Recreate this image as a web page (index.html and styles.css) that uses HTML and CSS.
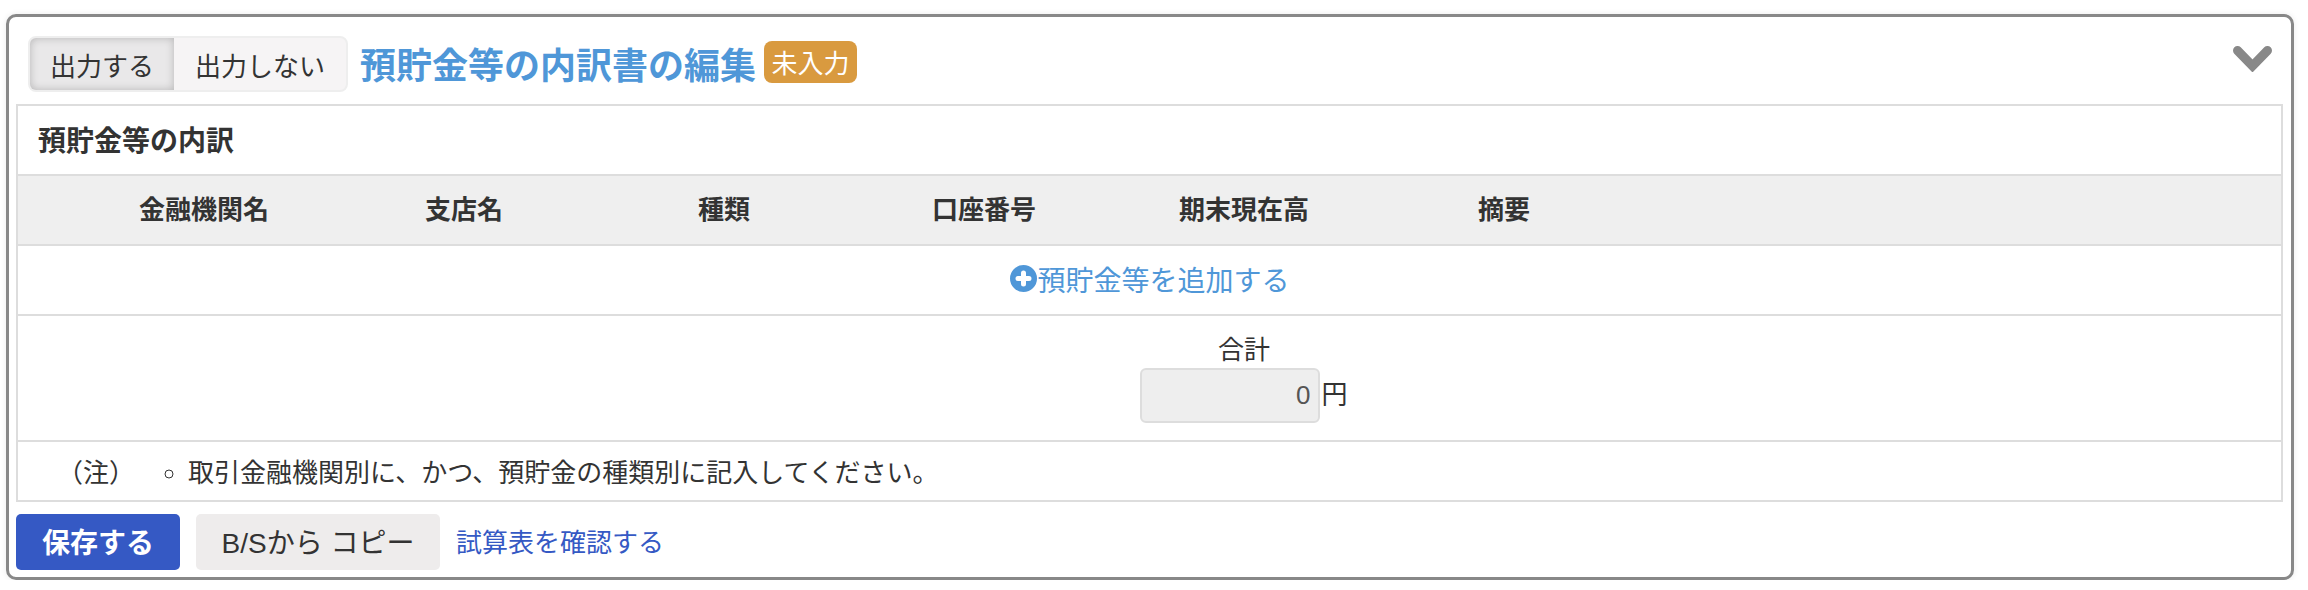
FILE: index.html

```html
<!DOCTYPE html>
<html lang="ja">
<head>
    <meta charset="UTF-8">
    <title>預貯金等の内訳書の編集</title>
    <link rel="stylesheet" href="styles.css">
</head>
<body>
    <section class="card">
        <header class="card-head">
            <div class="toggle">
                <span class="toggle-item active">出力する</span>
                <span class="toggle-item">出力しない</span>
            </div>
            <h2 class="card-title">預貯金等の内訳書の編集</h2>
            <span class="badge">未入力</span>
            <svg class="chevron" width="39" height="26" viewBox="0 0 39 26">
                <path d="M4.5 4.5 L19.5 20 L34.5 4.5" fill="none" stroke="#888" stroke-width="9" stroke-linecap="round" stroke-linejoin="miter"/>
            </svg>
        </header>

        <div class="panel">
            <h3 class="panel-title">預貯金等の内訳</h3>
            <div class="row-grid head-row">
                <span class="col-1">金融機関名</span>
                <span class="col-2">支店名</span>
                <span class="col-3">種類</span>
                <span class="col-4">口座番号</span>
                <span class="col-5">期末現在高</span>
                <span class="col-6">摘要</span>
            </div>
            <div class="add-row">
                <a class="add-link" href="#">
                    <svg class="add-icon" width="27" height="27" viewBox="0 0 27 27">
                        <circle cx="13.5" cy="13.5" r="13.5" fill="#4f97d8"/>
                        <path d="M13.5 8 V19 M8 13.5 H19" stroke="#fff" stroke-width="5" stroke-linecap="round"/>
                    </svg>預貯金等を追加する</a>
            </div>
            <div class="row-grid total-row">
                <div class="col-5 total-cell">
                    <label class="total-label" for="total">合計</label>
                    <div class="total-field">
                        <input class="total-input" id="total" type="text" value="0" readonly>
                        <span class="unit">円</span>
                    </div>
                </div>
            </div>
            <div class="note-row">
                <span class="note-label">（注）</span>
                <ul class="note-list">
                    <li>取引金融機関別に、かつ、預貯金の種類別に記入してください。</li>
                </ul>
            </div>
        </div>

        <footer class="actions">
            <button class="btn btn-primary" type="button">保存する</button>
            <button class="btn btn-light" type="button">B/Sから コピー</button>
            <a class="trial-link" href="#">試算表を確認する</a>
        </footer>
    </section>
</body>
</html>
```

FILE: styles.css

```css
* {
    box-sizing: border-box;
}
body {
    margin: 0;
    padding: 14px 14px 0 6px;
    background-color: #fff;
    color: #333;
    font-family: "Liberation Sans", "Noto Sans CJK JP", sans-serif;
    font-size: 26px;
}
.card {
    height: 566px;
    padding: 0 8px 0 7px;
    border: 3px solid #888;
    border-radius: 10px;
    box-shadow: 0 0 6px rgba(0, 0, 0, 0.08);
}
.card-head {
    display: flex;
    align-items: center;
    height: 87px;
    padding: 19px 0 12px 12px;
}
.toggle {
    display: flex;
    width: 320px;
    height: 56px;
    border: 2px solid #eee;
    border-radius: 8px;
    background-color: #f6f4f5;
}
.toggle-item {
    display: flex;
    align-items: center;
    justify-content: center;
    flex: 1 1 auto;
}
.toggle-item.active {
    flex: 0 0 144px;
    border-radius: 6px 0 0 6px;
    background-color: #e9e8e9;
    box-shadow: inset 0 0 9px rgba(0, 0, 0, 0.22);
}
.card-title {
    margin: 0 8px 3px 12px;
    color: #4f97d8;
    font-size: 36px;
    font-weight: bold;
}
.badge {
    display: flex;
    align-items: center;
    justify-content: center;
    width: 93px;
    height: 42px;
    margin-bottom: 4px;
    padding-bottom: 1px;
    border-radius: 8px;
    background-color: #d99a3f;
    color: #fff;
}
.chevron {
    margin: -10px 11px 0 auto;
}
.panel {
    border: 2px solid #ddd;
}
.panel-title {
    display: flex;
    align-items: center;
    height: 70px;
    margin: 0;
    padding: 0 0 2px 20px;
    border-bottom: 2px solid #ddd;
    font-size: 28px;
}
.row-grid {
    display: grid;
    grid-template-columns: 56px repeat(6, 260px) 1fr;
    border-bottom: 2px solid #ddd;
}
.col-1 { grid-column: 2; }
.col-2 { grid-column: 3; }
.col-3 { grid-column: 4; }
.col-4 { grid-column: 5; }
.col-5 { grid-column: 6; }
.col-6 { grid-column: 7; }
.head-row {
    align-items: center;
    height: 70px;
    padding-bottom: 5px;
    background-color: #efefef;
    font-weight: bold;
    text-align: center;
}
.add-row {
    display: flex;
    justify-content: center;
    align-items: center;
    height: 70px;
    padding-bottom: 3px;
    border-bottom: 2px solid #ddd;
}
.add-link {
    display: flex;
    align-items: center;
    margin-left: 1px;
    color: #4f97d8;
    font-size: 28px;
    text-decoration: none;
}
.total-row {
    height: 126px;
}
.total-cell {
    display: flex;
    flex-direction: column;
    align-items: center;
    padding-top: 16px;
}
.total-label {
    line-height: 36px;
}
.total-field {
    display: flex;
    align-items: center;
}
.total-input {
    width: 180px;
    height: 55px;
    padding: 0 8px;
    border: 2px solid #ddd;
    border-radius: 6px;
    background-color: #eee;
    color: #555;
    font-family: inherit;
    font-size: 26px;
    text-align: right;
}
.unit {
    margin: 0 0 6px 1px;
}
.note-row {
    display: flex;
    align-items: center;
    height: 58px;
    padding: 0 0 2px 39px;
}
.note-label {
    width: 115px;
}
.note-list {
    margin: 0;
    padding: 0 0 0 16px;
    list-style: circle;
}
.actions {
    display: flex;
    align-items: center;
    margin-top: 12px;
}
.btn {
    height: 56px;
    padding: 0 0 3px;
    border: none;
    border-radius: 5px;
    font-family: inherit;
    font-size: 28px;
}
.btn-primary {
    width: 164px;
    background-color: #3559c4;
    color: #fff;
    font-weight: bold;
}
.btn-light {
    width: 244px;
    margin-left: 16px;
    background-color: #eeecec;
    color: #333;
}
.trial-link {
    margin: 0 0 3px 16px;
    color: #3559c4;
    text-decoration: none;
}
```
